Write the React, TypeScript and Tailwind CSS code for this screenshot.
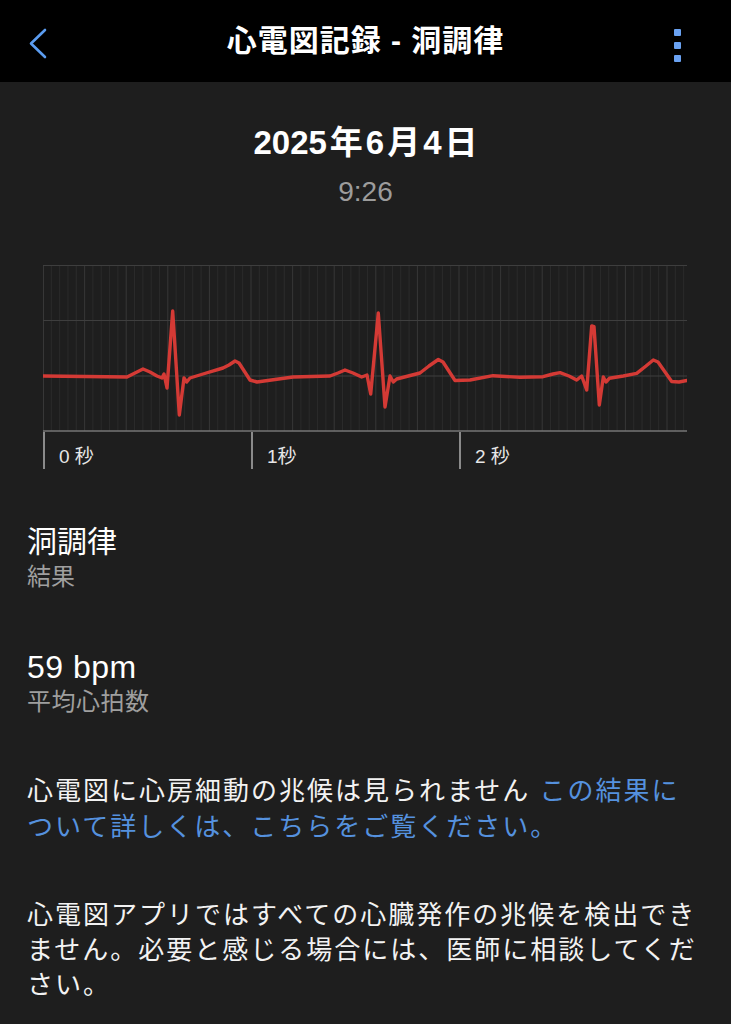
import React from "react";

const FONT = { fontFamily: '"Liberation Sans", "Noto Sans CJK JP", sans-serif' };

const ECG: [number, number][] = [
  [0, 111], [84, 112], [92, 108], [100, 104], [107, 107], [114, 111], [119, 113], [121, 109],
  [124, 123], [129.7, 46], [136.3, 150], [141, 113], [143.7, 117], [147, 113], [160, 109],
  [180, 103], [186, 100], [192, 96], [196, 98], [207, 115], [214, 117], [250, 112], [287, 111],
  [295, 108], [302, 105], [310, 108], [318.7, 112], [324, 110], [327.7, 129], [335.3, 48],
  [342, 142], [347, 111], [350.3, 117], [353.7, 114], [377, 108], [386, 101], [395.3, 94.5],
  [400, 97], [412, 115.5], [427, 115], [450, 110.7], [477, 112.3], [500, 111.7], [510, 109],
  [517, 107.7], [526, 111], [533.7, 115], [538.7, 111], [543.7, 125], [548.7, 61], [551, 61.7],
  [556.3, 140], [560.3, 112], [563, 117], [566.3, 113.3], [580.3, 111], [593.7, 108.3],
  [603, 101], [610.3, 95], [615, 97], [628.7, 116.5], [636, 117], [644, 115.5],
];

function Chart() {
  const W = 644;
  const H = 166;
  const minor = 208 / 25;
  const vlines: number[] = [];
  for (let i = 1; i * minor < W; i++) vlines.push(i);
  return (
    <svg width={W} height={H + 1} viewBox={`0 0 ${W} ${H + 1}`} className="block">
      {vlines.map((i) => (
        <line
          key={i}
          x1={i * minor}
          x2={i * minor}
          y1={0}
          y2={H}
          stroke={i % 5 === 0 ? "#373737" : "#2b2b2b"}
          strokeWidth={1}
        />
      ))}
      <line x1={0.5} x2={0.5} y1={0} y2={H} stroke="#373737" strokeWidth={1} />
      {[0.5, 55.5, 111].map((y) => (
        <line key={y} x1={0} x2={W} y1={y} y2={y} stroke="#3e3e3e" strokeWidth={1.2} />
      ))}
      <line x1={0} x2={W} y1={H} y2={H} stroke="#767676" strokeWidth={1.5} />
      <polyline
        points={ECG.map(([x, y]) => `${x},${y}`).join(" ")}
        fill="none"
        stroke="#d43a35"
        strokeWidth={3.4}
        strokeLinejoin="round"
        strokeLinecap="round"
      />
    </svg>
  );
}

export default function App() {
  return (
    <div className="w-[731px] min-h-[1024px] bg-[#1e1e1e] text-[#f2f2f2]" style={FONT}>
      <header className="relative flex h-[82px] items-center justify-center bg-black">
        <svg
          className="absolute left-[28px] top-[28px]"
          width="20"
          height="32"
          viewBox="0 0 20 32"
          fill="none"
        >
          <path d="M17 2 L3 15.5 L17 29" stroke="#5b9cf0" strokeWidth="2.6" strokeLinecap="round" strokeLinejoin="round" />
        </svg>
        <h1 className="text-[30px] font-semibold leading-none tracking-[1px] text-white">
          心電図記録 - 洞調律
        </h1>
        <div className="absolute right-[50px] top-[29px] flex flex-col gap-[6px]">
          <span className="block h-[7px] w-[7px] rounded-[1px] bg-[#6aa2f2]" />
          <span className="block h-[7px] w-[7px] rounded-[1px] bg-[#6aa2f2]" />
          <span className="block h-[7px] w-[7px] rounded-[1px] bg-[#6aa2f2]" />
        </div>
      </header>

      <main className="flex flex-col">
        <div className="flex justify-center gap-[3px] pt-[41px] text-[33px] font-semibold leading-[40px] text-white">
          <span>2025</span>
          <span>年</span>
          <span>6</span>
          <span>月</span>
          <span>4</span>
          <span>日</span>
        </div>
        <div className="mt-[11px] text-center text-[28px] leading-[36px] text-[#9c9c9c]">9:26</div>

        <div className="ml-[43px] mt-[55px] w-[644px]">
          <Chart />
          <div className="flex">
            {["0 秒", "1秒", "2 秒"].map((t) => (
              <div
                key={t}
                className="h-[37px] w-[208px] border-l-2 border-[#8a8a8a] pl-[14px] pt-[12px] text-[19px] leading-[26px] text-[#e6e6e6]"
              >
                {t}
              </div>
            ))}
          </div>
        </div>

        <section className="mt-[54px] px-[27px]">
          <div className="text-[30px] leading-[38px] text-white">洞調律</div>
          <div className="text-[24px] leading-[32px] text-[#9f9f9f]">結果</div>
        </section>

        <section className="mt-[55px] px-[27px]">
          <div className="text-[32px] leading-[38px] tracking-[0.5px] text-white">59 bpm</div>
          <div className="text-[24px] leading-[32px] tracking-[0.5px] text-[#9f9f9f]">平均心拍数</div>
        </section>

        <p className="mt-[55px] px-[27px] text-[26px] leading-[36px] tracking-[2px] text-[#f2f2f2]">
          <span>心電図に心房細動の兆候は見られません </span>
          <span className="text-[#5591de]">この結果に</span>
          <span className="text-[#5591de]">ついて詳しくは、こちらをご覧ください。</span>
        </p>

        <p className="mt-[53px] px-[27px] pb-[20px] text-[26px] leading-[35px] tracking-[2px] text-[#f2f2f2]">
          心電図アプリではすべての心臓発作の兆候を検出できません。必要と感じる場合には、医師に相談してください。
        </p>
      </main>
    </div>
  );
}
